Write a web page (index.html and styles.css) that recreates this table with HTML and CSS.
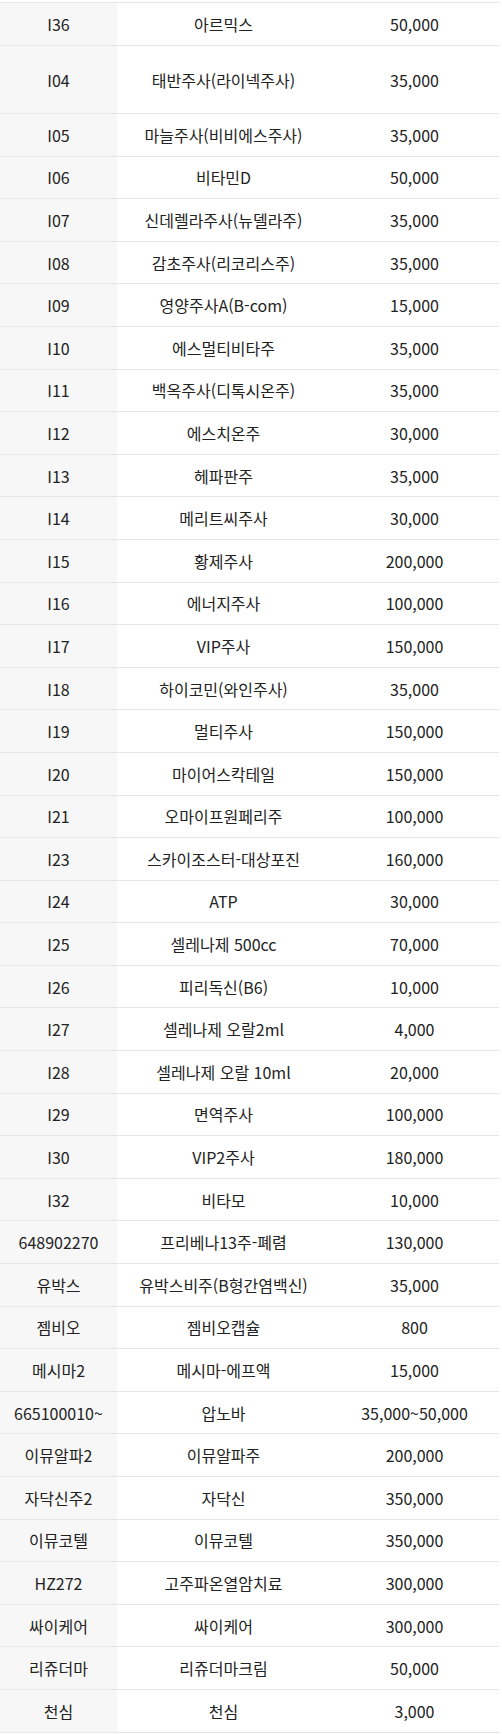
FILE: index.html
```html
<!DOCTYPE html>
<html lang="ko">
    <head>
        <meta charset="utf-8">
        <link rel="stylesheet" href="styles.css">
    </head>
    <body>
        <div id="list">
            <div class="row first"><div class="code">I36</div><div class="name">아르믹스</div><div class="price">50,000</div></div>
            <div class="row tall"><div class="code">I04</div><div class="name">태반주사(라이넥주사)</div><div class="price">35,000</div></div>
            <div class="row"><div class="code">I05</div><div class="name">마늘주사(비비에스주사)</div><div class="price">35,000</div></div>
            <div class="row"><div class="code">I06</div><div class="name">비타민D</div><div class="price">50,000</div></div>
            <div class="row"><div class="code">I07</div><div class="name">신데렐라주사(뉴델라주)</div><div class="price">35,000</div></div>
            <div class="row"><div class="code">I08</div><div class="name">감초주사(리코리스주)</div><div class="price">35,000</div></div>
            <div class="row"><div class="code">I09</div><div class="name">영양주사A(B-com)</div><div class="price">15,000</div></div>
            <div class="row"><div class="code">I10</div><div class="name">에스멀티비타주</div><div class="price">35,000</div></div>
            <div class="row"><div class="code">I11</div><div class="name">백옥주사(디톡시온주)</div><div class="price">35,000</div></div>
            <div class="row"><div class="code">I12</div><div class="name">에스치온주</div><div class="price">30,000</div></div>
            <div class="row"><div class="code">I13</div><div class="name">헤파판주</div><div class="price">35,000</div></div>
            <div class="row"><div class="code">I14</div><div class="name">메리트씨주사</div><div class="price">30,000</div></div>
            <div class="row"><div class="code">I15</div><div class="name">황제주사</div><div class="price">200,000</div></div>
            <div class="row"><div class="code">I16</div><div class="name">에너지주사</div><div class="price">100,000</div></div>
            <div class="row"><div class="code">I17</div><div class="name">VIP주사</div><div class="price">150,000</div></div>
            <div class="row"><div class="code">I18</div><div class="name">하이코민(와인주사)</div><div class="price">35,000</div></div>
            <div class="row"><div class="code">I19</div><div class="name">멀티주사</div><div class="price">150,000</div></div>
            <div class="row"><div class="code">I20</div><div class="name">마이어스칵테일</div><div class="price">150,000</div></div>
            <div class="row"><div class="code">I21</div><div class="name">오마이프원페리주</div><div class="price">100,000</div></div>
            <div class="row"><div class="code">I23</div><div class="name">스카이조스터-대상포진</div><div class="price">160,000</div></div>
            <div class="row"><div class="code">I24</div><div class="name">ATP</div><div class="price">30,000</div></div>
            <div class="row"><div class="code">I25</div><div class="name">셀레나제 500cc</div><div class="price">70,000</div></div>
            <div class="row"><div class="code">I26</div><div class="name">피리독신(B6)</div><div class="price">10,000</div></div>
            <div class="row"><div class="code">I27</div><div class="name">셀레나제 오랄2ml</div><div class="price">4,000</div></div>
            <div class="row"><div class="code">I28</div><div class="name">셀레나제 오랄 10ml</div><div class="price">20,000</div></div>
            <div class="row"><div class="code">I29</div><div class="name">면역주사</div><div class="price">100,000</div></div>
            <div class="row"><div class="code">I30</div><div class="name">VIP2주사</div><div class="price">180,000</div></div>
            <div class="row"><div class="code">I32</div><div class="name">비타모</div><div class="price">10,000</div></div>
            <div class="row"><div class="code">648902270</div><div class="name">프리베나13주-폐렴</div><div class="price">130,000</div></div>
            <div class="row"><div class="code">유박스</div><div class="name">유박스비주(B형간염백신)</div><div class="price">35,000</div></div>
            <div class="row"><div class="code">젬비오</div><div class="name">젬비오캡슐</div><div class="price">800</div></div>
            <div class="row"><div class="code">메시마2</div><div class="name">메시마-에프액</div><div class="price">15,000</div></div>
            <div class="row"><div class="code">665100010~</div><div class="name">압노바</div><div class="price">35,000~50,000</div></div>
            <div class="row"><div class="code">이뮤알파2</div><div class="name">이뮤알파주</div><div class="price">200,000</div></div>
            <div class="row"><div class="code">자닥신주2</div><div class="name">자닥신</div><div class="price">350,000</div></div>
            <div class="row"><div class="code">이뮤코텔</div><div class="name">이뮤코텔</div><div class="price">350,000</div></div>
            <div class="row"><div class="code">HZ272</div><div class="name">고주파온열암치료</div><div class="price">300,000</div></div>
            <div class="row"><div class="code">싸이케어</div><div class="name">싸이케어</div><div class="price">300,000</div></div>
            <div class="row"><div class="code">리쥬더마</div><div class="name">리쥬더마크림</div><div class="price">50,000</div></div>
            <div class="row"><div class="code">천심</div><div class="name">천심</div><div class="price">3,000</div></div>
        </div>
    </body>
</html>
```

FILE: styles.css
```css
*{
	margin: 0;
	padding: 0;
	box-sizing: border-box;
}
body{
	background: #fff;
	font-family: "Noto Sans CJK KR", "Noto Sans", sans-serif;
	font-size: 16px;
	color: #222;
}
#list{
	width: 499px;
	margin-top: 2px;
	border-top: 1px solid #e6e6e6;
}
.row{
	display: grid;
	grid-template-columns: 117px 213px 169px;
	height: 42.6px;
	border-bottom: 1px solid #e6e6e6;
}
.row.first{
	height: 43px;
}
.row.tall{
	height: 68px;
}
.code,.name,.price{
	display: flex;
	align-items: center;
	justify-content: center;
	white-space: nowrap;
}
.code{
	background: #f7f7f7;
}
```
